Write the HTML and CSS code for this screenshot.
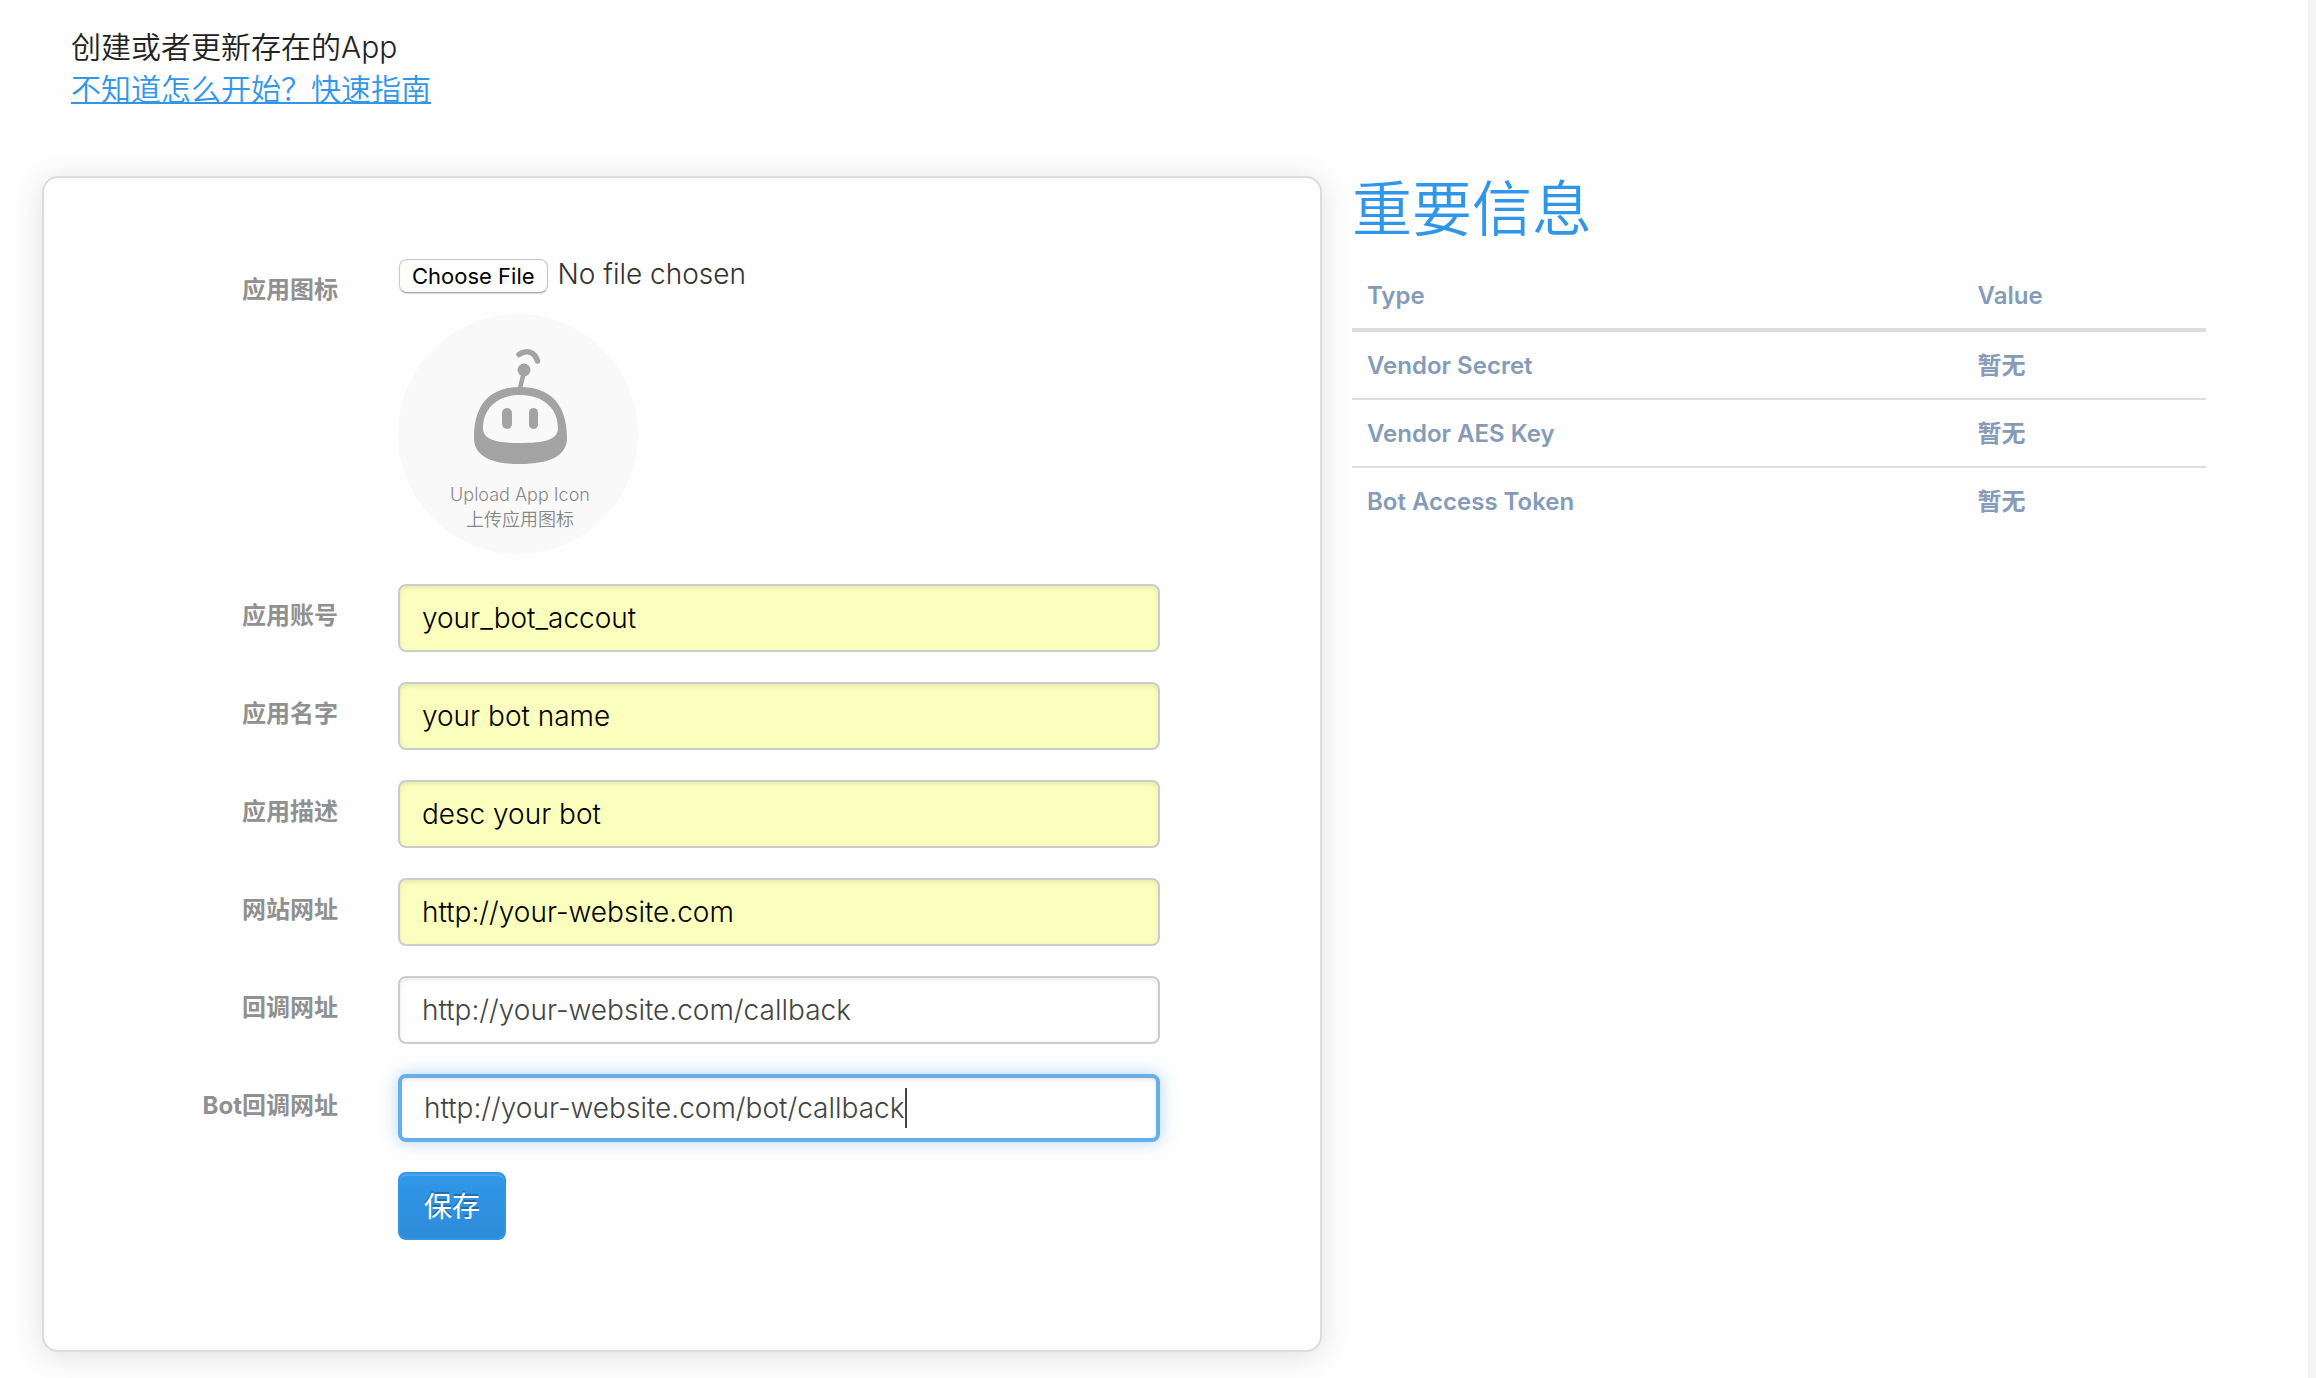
FILE: index.html
```html
<!DOCTYPE html>
<html lang="zh-CN">
<head>
<meta charset="utf-8">
<meta name="viewport" content="width=device-width, initial-scale=1">
<title>App</title>
<link rel="stylesheet" href="styles.css">
</head>
<body>
<header class="intro">
  <p class="intro-text">创建或者更新存在的App</p>
  <a class="intro-link" href="#guide">不知道怎么开始？快速指南</a>
</header>
<main class="columns">
  <form class="card">
    <div class="row">
      <label class="label" for="icon">应用图标</label>
      <div class="upload">
        <input class="file" type="file" id="icon">
        <svg class="avatar" viewBox="0 0 240 240" role="img" aria-label="Upload App Icon">
          <circle cx="120" cy="120" r="120" fill="#f9f9f9"/>
          <g fill="#a3a3a3">
            <path fill-rule="evenodd" d="M122 73C152 73 169 90 169 124C169 141 153 150 122 150C91 150 76 141 76 124C76 90 92 73 122 73ZM122 81C99 81 85 95 85 114C85 126 99 129 122 129C146 129 160 126 160 114C160 95 146 81 122 81Z"/>
            <rect x="104" y="94" width="10" height="21" rx="5"/>
            <rect x="131" y="94" width="9" height="21" rx="4.500"/>
            <circle cx="126" cy="56" r="6.500"/>
          </g>
          <path d="M126 58L121.500 76" stroke="#a3a3a3" stroke-width="4.500" fill="none"/>
          <path d="M121 40.500C129 35 137 38 139.500 47" stroke="#a3a3a3" stroke-width="5.500" stroke-linecap="round" fill="none"/>
          <text class="avatar-text" x="122" y="187">Upload App Icon</text>
          <text class="avatar-text" x="122" y="212">上传应用图标</text>
        </svg>
      </div>
    </div>
    <div class="row">
      <label class="label" for="account">应用账号</label>
      <input class="input filled" id="account" type="text" value="your_bot_accout">
    </div>
    <div class="row">
      <label class="label" for="name">应用名字</label>
      <input class="input filled" id="name" type="text" value="your bot name">
    </div>
    <div class="row">
      <label class="label" for="desc">应用描述</label>
      <input class="input filled" id="desc" type="text" value="desc your bot">
    </div>
    <div class="row">
      <label class="label" for="site">网站网址</label>
      <input class="input filled" id="site" type="text" value="http://your-website.com">
    </div>
    <div class="row">
      <label class="label" for="callback">回调网址</label>
      <input class="input" id="callback" type="text" value="http://your-website.com/callback">
    </div>
    <div class="row">
      <label class="label" for="bot">Bot回调网址</label>
      <div class="active-field">
        <input class="input active" id="bot" type="text" value="http://your-website.com/bot/callback">
        <span class="caret"></span>
      </div>
    </div>
    <div class="row">
      <button class="save" type="submit">保存</button>
    </div>
  </form>
  <section class="info">
    <h2 class="info-title">重要信息</h2>
    <table class="table">
      <thead>
        <tr><th class="type" scope="col">Type</th><th scope="col">Value</th></tr>
      </thead>
      <tbody>
        <tr><td>Vendor Secret</td><td>暂无</td></tr>
        <tr><td>Vendor AES Key</td><td>暂无</td></tr>
        <tr><td>Bot Access Token</td><td>暂无</td></tr>
      </tbody>
    </table>
  </section>
</main>
</body>
</html>
```
FILE: styles.css
```css
* { box-sizing: border-box; }

html {
  min-height: 100%;
  background: linear-gradient(to left, #f5f5f5 4px, #efefef 8px, #fefefe 8px);
}

body {
  margin: 0 8px 0 0;
  padding: 26px 102px 26px 42px;
  font-family: Inter, "Noto Sans CJK SC", sans-serif;
  font-size: 28px;
  font-weight: 300;
  color: #222;
}

.intro {
  margin: 0 0 66px 29px;
  font-size: 30px;
  font-weight: 350;
  line-height: 42px;
}

.intro-text { margin: 0; }

.intro-link {
  display: block;
  width: fit-content;
  color: #3097e8;
  text-decoration: underline;
  text-decoration-thickness: 2px;
  text-decoration-skip-ink: none;
  text-underline-offset: 2px;
}

.columns {
  display: grid;
  grid-template-columns: 1280fr 854fr;
  gap: 30px;
  align-items: start;
}

.card {
  display: flex;
  flex-direction: column;
  gap: 30px;
  padding: 80px 160px 110px 0;
  border: 2px solid #dcdcdc;
  border-radius: 16px;
  background: #fefefe;
  box-shadow: 0 4px 30px rgba(0, 0, 0, 0.12);
}

.row {
  display: grid;
  grid-template-columns: 294px 1fr;
  column-gap: 60px;
  align-items: start;
}

.label {
  padding-top: 12px;
  font-size: 24px;
  font-weight: 700;
  line-height: 40px;
  text-align: right;
  color: #909090;
}

.upload {
  display: flex;
  flex-direction: column;
  gap: 20px;
}

.file {
  height: 36px;
  font: inherit;
  line-height: 32px;
  color: #333;
}

.file::file-selector-button {
  height: 34px;
  margin: 0 10px 0 1px;
  padding: 0 12px;
  border: 1px solid #c8c8c8;
  border-bottom-color: #a8a8a8;
  border-radius: 8px;
  background: #fff;
  box-shadow: 0 1px 1px rgba(0, 0, 0, 0.15);
  font-family: inherit;
  font-size: 22px;
  font-weight: 400;
  line-height: 30px;
  color: #000;
}

.avatar {
  width: 240px;
  height: 240px;
}

.avatar-text {
  font-size: 18px;
  font-weight: 350;
  text-anchor: middle;
  fill: #888;
}

.input {
  width: 100%;
  height: 68px;
  padding: 0 22px;
  border: 2px solid #ccc;
  border-radius: 8px;
  outline: 0;
  background: #fefefe;
  box-shadow: inset 0 2px 4px rgba(0, 0, 0, 0.09);
  font: inherit;
  color: #444;
}

.filled {
  background: #faffbd;
  color: #000;
}

.active-field {
  position: relative;
  display: flex;
}

.active {
  border: 4px solid #66afe9;
  box-shadow: inset 0 2px 4px rgba(0, 0, 0, 0.09), 0 0 16px rgba(102, 175, 233, 0.5);
}

.caret {
  position: absolute;
  top: 14px;
  left: 507px;
  width: 2px;
  height: 40px;
  background: #444;
}

.save {
  grid-column: 2;
  justify-self: start;
  height: 68px;
  padding: 0 24px 2px;
  border: 2px solid #3097e8;
  border-radius: 8px;
  background: linear-gradient(#3097e8, #2d8cd8);
  box-shadow: inset 0 2px 0 rgba(255, 255, 255, 0.15);
  font: inherit;
  font-weight: 400;
  color: #fff;
  text-shadow: 0 -2px 0 rgba(0, 0, 0, 0.25);
}

.info-title {
  margin: 0 0 20px;
  font-size: 60px;
  font-weight: 350;
  line-height: 66px;
  color: #3097e8;
}

.table {
  width: 100%;
  border-collapse: separate;
  border-spacing: 0;
  table-layout: fixed;
  font-size: 24px;
  line-height: 34px;
  color: #859bb8;
}

.table th,
.table td {
  padding: 17px 15px 15px;
  border-bottom: 2px solid #ddd;
  font-weight: 600;
  text-align: left;
}

.table th { border-bottom-width: 4px; }

.table tr:last-child td { border-bottom: 0; }

.type { width: 71.5%; }
```
